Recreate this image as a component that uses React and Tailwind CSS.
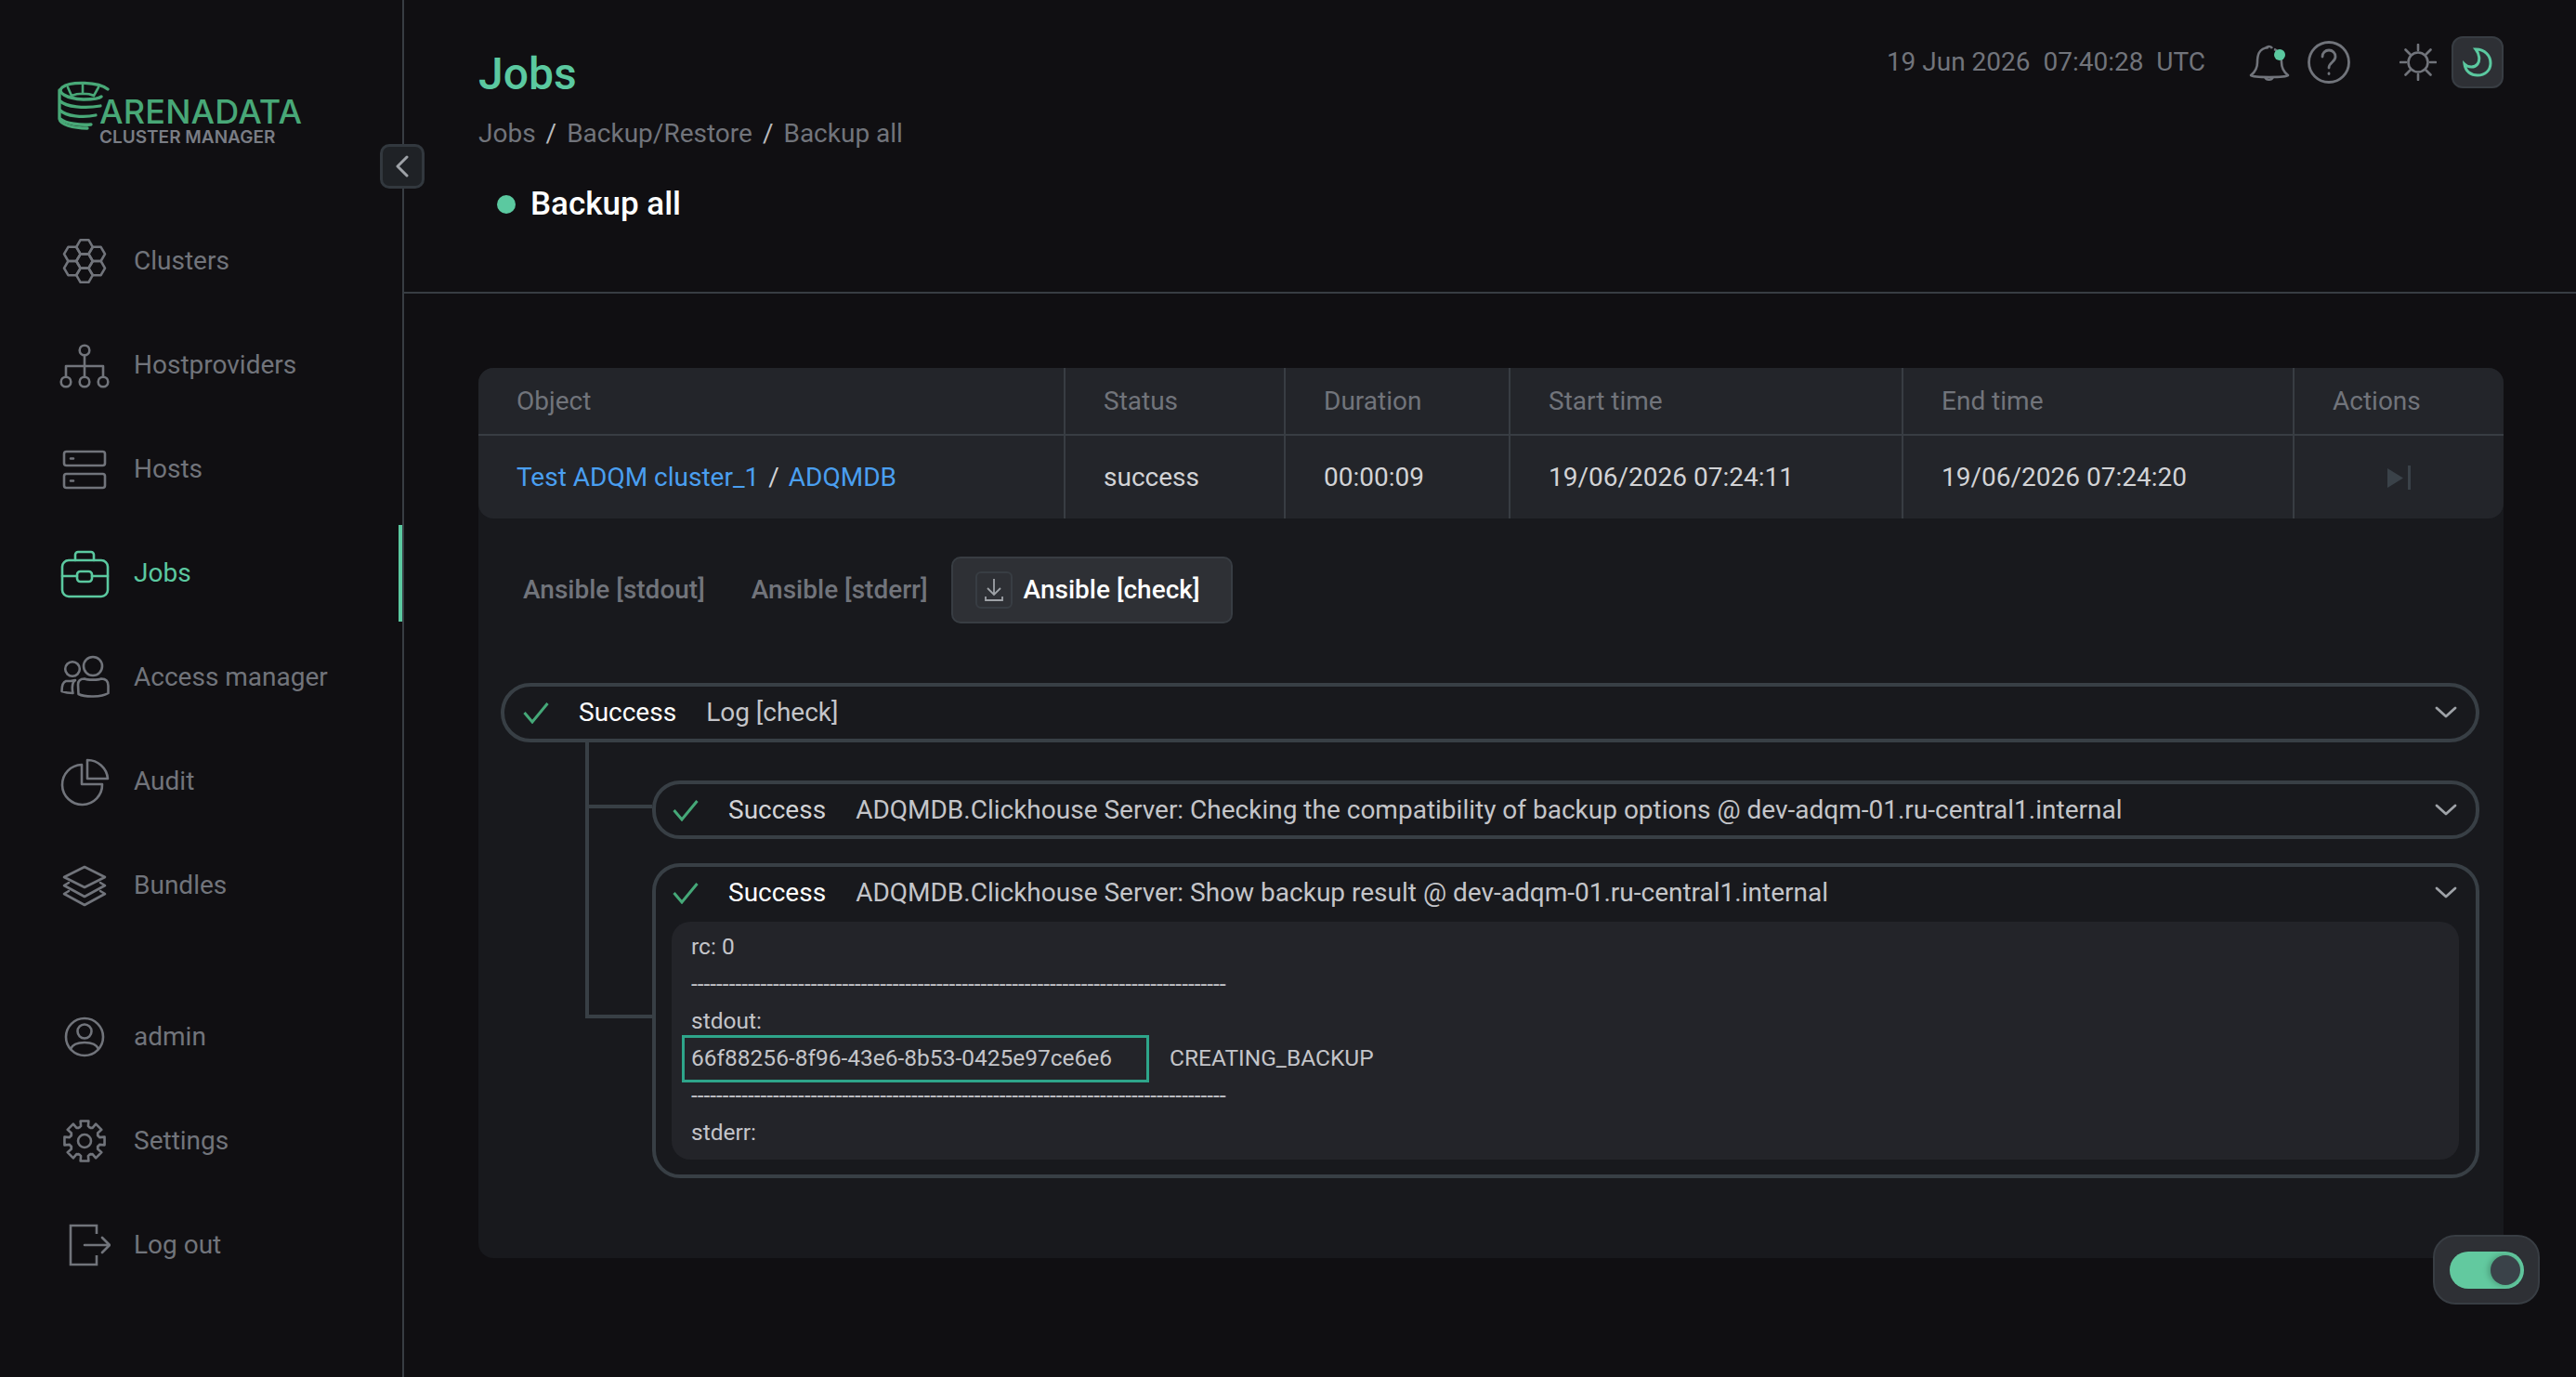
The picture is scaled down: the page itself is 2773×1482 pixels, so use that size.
import React from "react";

const hex = (cx, cy, r) =>
  [0, 60, 120, 180, 240, 300]
    .map((a) => `${(cx + r * Math.cos((a * Math.PI) / 180)).toFixed(2)},${(cy + r * Math.sin((a * Math.PI) / 180)).toFixed(2)}`)
    .join(" ");

const gearPath = () => {
  const pts = [];
  for (let i = 0; i < 8; i++) {
    const c = (i * Math.PI) / 4 - Math.PI / 2;
    [[-0.44, 15.5], [-0.24, 16.5], [-0.2, 22], [0.2, 22], [0.24, 16.5], [0.44, 15.5]].forEach(([d, r]) => {
      pts.push(`${(28 + r * Math.cos(c + d)).toFixed(2)} ${(28 + r * Math.sin(c + d)).toFixed(2)}`);
    });
  }
  return "M" + pts.join("L") + "Z";
};

// nav icons share a 56px box centred on the row
const NavIcon = ({ children }) => (
  <svg viewBox="0 0 56 56" fill="none" stroke="currentColor" strokeWidth="2.6" strokeLinejoin="round" strokeLinecap="round" className="w-[56px] h-[56px] flex-none">
    {children}
  </svg>
);

const icons = {
  clusters: (
    <>
      <polygon points={hex(28, 28, 8.8)} />
      <polygon points={hex(28, 12.8, 8.8)} />
      <polygon points={hex(28, 43.2, 8.8)} />
      <polygon points={hex(14.8, 20.4, 8.8)} />
      <polygon points={hex(41.2, 20.4, 8.8)} />
      <polygon points={hex(14.8, 35.6, 8.8)} />
      <polygon points={hex(41.2, 35.6, 8.8)} />
    </>
  ),
  hostproviders: (
    <>
      <circle cx="28" cy="12" r="5.3" />
      <path d="M28 17.3V40.5M8 40.5V29H48V40.5" />
      <circle cx="8" cy="46" r="5.3" />
      <circle cx="28" cy="46" r="5.3" />
      <circle cx="48" cy="46" r="5.3" />
    </>
  ),
  hosts: (
    <>
      <rect x="6" y="9" width="44" height="15" rx="2.5" />
      <rect x="6" y="33" width="44" height="15" rx="2.5" />
      <path d="M13 16.5h3M13 40.5h3" />
    </>
  ),
  jobs: (
    <>
      <rect x="4" y="14" width="49" height="39" rx="7" />
      <path d="M18 14V8a3 3 0 0 1 3-3h14a3 3 0 0 1 3 3v6M4 31h16M36 31h17" />
      <rect x="20" y="26" width="16" height="11" rx="3.5" />
    </>
  ),
  access: (
    <>
      <circle cx="37" cy="16" r="10" />
      <circle cx="15" cy="19" r="7.8" />
      <path d="M21 36c0-5 3-6.5 7-6.5 3 1.5 15 1.5 18 0 4 0 7.5 2 7.5 7.5v8c-7 4.5-25 4.5-32 1z" />
      <path d="M13 32l5-1-2 2c-1.5 4-1.5 8-.5 12-4 0-8-.5-12-2 0-5 1.5-10 4.5-11z" />
    </>
  ),
  audit: (
    <>
      <path d="M25 10V31H47A21.5 21.5 0 1 1 25 10Z" />
      <path d="M31 5V25H53A22 22 0 0 0 31 5Z" />
    </>
  ),
  bundles: (
    <>
      <path d="M28 8L50 19L28 30L6 19Z" />
      <path d="M11 25L6 28L28 40L50 28L45 25" />
      <path d="M11 34L6 37L28 49L50 37L45 34" />
    </>
  ),
  admin: (
    <>
      <circle cx="28" cy="28" r="20" />
      <circle cx="28" cy="22" r="7.5" />
      <path d="M13 41c2-5 8-7 15-7s13 2 15 7" />
    </>
  ),
  settings: (
    <>
      <path d={gearPath()} />
      <circle cx="28" cy="28" r="7" />
    </>
  ),
  logout: (
    <>
      <path d="M41 16V7H13V49H41V39" strokeLinecap="butt" strokeLinejoin="miter" />
      <path d="M28 28H55M47 20L55 28L47 36" />
    </>
  ),
};

const NavItem = ({ icon, label, active }) => (
  <div className={`relative flex items-center h-[112px] pl-[63px] gap-[25px] text-[28px] ${active ? "text-[#5bc9a0]" : "text-[#71747b]"}`}>
    <NavIcon>{icons[icon]}</NavIcon>
    <span>{label}</span>
    {active && <div className="absolute right-0 top-[4px] w-[4px] h-[104px] bg-[#5bc9a0]"></div>}
  </div>
);

const Logo = () => (
  <div className="relative h-[72px] w-[270px] ml-[62px]">
    <svg viewBox="0 0 56 54" fill="none" stroke="#48a877" strokeWidth="3.3" strokeLinecap="round" className="absolute left-0 top-0 w-[56px] h-[54px]">
      <path d="M54 9C44 1 14 0 5 7C-1 12 8 19 28 20C37 20 45 19 47 17" />
      <path d="M11 7L15 16C22 13 33 13 39 16L44 7M27 3V14" strokeWidth="2.6" />
      <path d="M2 10V41C3 47 16 51 32 51" />
      <path d="M3 22C9 28 29 30 46 27" />
      <path d="M3 32C9 38 27 40 41 37" />
      <path d="M3 41C9 46 24 48 36 47" />
    </svg>
    <span className="absolute left-[45px] top-[15px] font-['Inter',sans-serif] font-medium text-[#48a877] text-[36px] leading-[36px] tracking-[0.2px] whitespace-nowrap">ARENADATA</span>
    <span className="absolute left-[45px] top-[51px] font-['Inter',sans-serif] font-semibold text-[#7a7d85] text-[19px] leading-[20px] whitespace-nowrap">CLUSTER MANAGER</span>
  </div>
);

const Check = () => (
  <svg viewBox="0 0 28 24" fill="none" stroke="#45a878" strokeWidth="3" className="w-[28px] h-[24px] flex-none">
    <path d="M1.5 12L10 22L26.5 2" />
  </svg>
);

const Chevron = () => (
  <svg viewBox="0 0 24 14" fill="none" stroke="#9ea2a7" strokeWidth="2.8" strokeLinecap="round" strokeLinejoin="round" className="w-[24px] h-[14px] flex-none">
    <path d="M2 2L12 11L22 2" />
  </svg>
);

const Status = ({ strong, label }) => (
  <div className="flex items-center h-[55px]">
    <Check />
    <span className={`ml-[32px] ${strong ? "text-white" : "text-[#d2d3d6]"}`}>Success</span>
    <span className="ml-[32px] flex-1 text-[#c4c5c9]">{label}</span>
    <Chevron />
  </div>
);

const cols = "grid grid-cols-[632px_237px_242px_423px_421px_1fr]";

const Th = ({ children, last }) => (
  <div className={`flex items-center pl-[41px] ${last ? "" : "border-r-2 border-[#383d43]"}`}>{children}</div>
);

export default function App() {
  return (
    <div className="relative flex w-full h-screen overflow-hidden bg-[#100f12] font-['Roboto',sans-serif] text-[28px] leading-[40px]">
      {/* Sidebar */}
      <aside className="relative flex-none w-[435px] border-r-2 border-[#383d43] flex flex-col pt-[87px]">
        <Logo />
        <nav className="mt-[66px]">
          <NavItem icon="clusters" label="Clusters" />
          <NavItem icon="hostproviders" label="Hostproviders" />
          <NavItem icon="hosts" label="Hosts" />
          <NavItem icon="jobs" label="Jobs" active />
          <NavItem icon="access" label="Access manager" />
          <NavItem icon="audit" label="Audit" />
          <NavItem icon="bundles" label="Bundles" />
        </nav>
        <nav className="mt-[51px]">
          <NavItem icon="admin" label="admin" />
          <NavItem icon="settings" label="Settings" />
          <NavItem icon="logout" label="Log out" />
        </nav>
        <button className="absolute left-[409px] top-[155px] w-[48px] h-[48px] flex items-center justify-center rounded-[10px] border-[3px] border-[#32383e] bg-[#1f2226]">
          <svg viewBox="0 0 16 24" fill="none" stroke="#9ea2a7" strokeWidth="3" strokeLinecap="round" strokeLinejoin="round" className="w-[16px] h-[24px]">
            <path d="M13 2L3 12L13 22" />
          </svg>
        </button>
      </aside>

      {/* Main */}
      <main className="flex-1 min-w-0">
        <header className="h-[316px] border-b-2 border-[#383d43] pl-[80px] pr-[78px] flex flex-col">
          <div className="flex justify-between">
            <div className="pt-[50px]">
              <h1 className="text-[48px] leading-[60px] font-medium text-[#5bc9a0]">Jobs</h1>
              <div className="mt-[14px] flex gap-[11px] text-[#71747b]">
                <span>Jobs</span>
                <span className="text-[#b9babd]">/</span>
                <span>Backup/Restore</span>
                <span className="text-[#b9babd]">/</span>
                <span>Backup all</span>
              </div>
            </div>
            <div className="flex items-center h-[56px] mt-[39px]">
              <span className="text-[#71747b] whitespace-pre">19 Jun 2026  07:40:28  UTC</span>
              <svg viewBox="0 0 44 44" fill="none" stroke="#71747b" strokeWidth="2.6" strokeLinejoin="round" className="ml-[47px] w-[44px] h-[44px]">
                <path d="M18 7a4 4 0 0 1 7 0" />
                <path d="M21 6C10 7 9 15 9 22c0 7-3 11-7 14 1 1 4 2 20 2s19-1 20-2c-4-3-7-7-7-14 0-1 0-2-.3-3M27 8c1 .3 2 1 3 2" />
                <path d="M17 38a5 5 0 0 0 9 0" />
                <circle cx="33" cy="14" r="6" fill="#5bc9a0" stroke="none" />
              </svg>
              <svg viewBox="0 0 46 46" fill="none" stroke="#71747b" strokeWidth="2.8" strokeLinecap="round" className="ml-[19px] w-[46px] h-[46px]">
                <circle cx="23" cy="23" r="21.5" />
                <path d="M16 17c0-4 3-7 7-7s7 3 7 7c0 6-7 6-7 12" />
                <path d="M23 35v.5" />
              </svg>
              <svg viewBox="0 0 40 40" fill="none" stroke="#71747b" strokeWidth="2.6" strokeLinecap="round" className="ml-[53px] w-[40px] h-[40px]">
                <circle cx="20" cy="20" r="10.5" />
                <path d="M20 1v6M20 33v6M1 20h6M33 20h6M6.5 6.5l5 5M28.5 28.5l5 5M6.5 33.500l5-5M28.5 11.500l5-5" />
              </svg>
              <button className="ml-[16px] w-[56px] h-[56px] flex items-center justify-center rounded-[12px] border-2 border-[#383d43] bg-[#2e3035]">
                <svg viewBox="0 0 32 32" fill="none" stroke="#5bc9a0" strokeWidth="3" strokeLinecap="round" className="w-[32px] h-[32px]">
                  <path d="M14 2C24 2 30 9 30 17C30 25 24 30 16 30C9 30 3 26 2 18C6 22 13 22 16 18C19 14 18 7 14 2Z" />
                </svg>
              </button>
            </div>
          </div>
          <div className="mt-[36px] flex items-center pl-[20px] gap-[16px] h-[40px]">
            <span className="w-[20px] h-[20px] rounded-full bg-[#5bc9a0]"></span>
            <span className="text-[35px] font-medium text-white">Backup all</span>
          </div>
        </header>

        <div className="pl-[80px] pr-[78px] pt-[80px]">
          <section className="h-[958px] rounded-[16px] bg-[#18191d]">
            {/* Job table */}
            <div className="rounded-[16px] bg-[#23252a]">
              <div className={`${cols} h-[73px] border-b-2 border-[#383d43] text-[#71747b]`}>
                <Th>Object</Th>
                <Th>Status</Th>
                <Th>Duration</Th>
                <Th>Start time</Th>
                <Th>End time</Th>
                <Th last>Actions</Th>
              </div>
              <div className={`${cols} h-[89px] text-[#d2d3d6]`}>
                <Th>
                  <span className="text-[#4a9ff0]">Test ADQM cluster_1</span>
                  <span className="mx-[10px]">/</span>
                  <span className="text-[#4a9ff0]">ADQMDB</span>
                </Th>
                <Th>success</Th>
                <Th>00:00:09</Th>
                <Th>19/06/2026 07:24:11</Th>
                <Th>19/06/2026 07:24:20</Th>
                <div className="flex items-center justify-center pl-[-2px]">
                  <svg viewBox="0 0 26 26" fill="#3a4249" className="w-[26px] h-[26px]">
                    <path d="M0 3L0 24L17 13.500Z" />
                    <rect x="22" y="0" width="3" height="26" />
                  </svg>
                </div>
              </div>
            </div>

            {/* Log tabs */}
            <div className="flex items-center h-[72px] mt-[41px] pl-[48px] font-medium">
              <span className="text-[#71747b]">Ansible [stdout]</span>
              <span className="ml-[50px] text-[#71747b]">Ansible [stderr]</span>
              <div className="ml-[25px] h-[72px] w-[303px] flex items-center gap-[12px] pl-[24px] rounded-[10px] border-2 border-[#383d43] bg-[#2e3035] text-white">
                <div className="w-[40px] h-[40px] flex items-center justify-center rounded-[6px] border-2 border-[#383d43]">
                  <svg viewBox="0 0 20 26" fill="none" stroke="#9ea2a7" strokeWidth="1.8" className="w-[20px] h-[26px]">
                    <path d="M10 1V18M3 11L10 18L17 11M1 20V24H19V20" />
                  </svg>
                </div>
                <span>Ansible [check]</span>
              </div>
            </div>

            {/* Log tree */}
            <div className="mt-[64px] ml-[24px] mr-[26px]">
              <div className="h-[64px] px-[20px] pr-[20px] rounded-[32px] border-4 border-[#383f45] flex items-center">
                <div className="flex-1"><Status strong label="Log [check]" /></div>
              </div>
              <div className="flex">
                <div className="ml-[91px] w-[72px] flex-none">
                  <div className="h-[71px] border-l-4 border-b-4 border-[#383f45]"></div>
                  <div className="h-[226px] border-l-4 border-b-4 border-[#383f45]"></div>
                </div>
                <div className="flex-1 min-w-0 pt-[41px]">
                  <div className="h-[63px] pl-[18px] pr-[20px] rounded-[30px] border-4 border-[#383f45] flex items-center">
                    <div className="flex-1"><Status label="ADQMDB.Clickhouse Server: Checking the compatibility of backup options @ dev-adqm-01.ru-central1.internal" /></div>
                  </div>
                  <div className="mt-[26px] h-[339px] pl-[18px] pr-[20px] rounded-[30px] border-4 border-[#383f45] flex flex-col">
                    <Status strong label="ADQMDB.Clickhouse Server: Show backup result @ dev-adqm-01.ru-central1.internal" />
                    <div className="mt-[4px] -ml-[1px] -mr-[2px] h-[256px] rounded-[20px] bg-[#232429] pl-[21px] pt-[7px] text-[24.5px] leading-[40px] text-[#c4c5c9]">
                      <div>rc: 0</div>
                      <div className="overflow-hidden whitespace-nowrap w-[576px]">{"-".repeat(94)}</div>
                      <div>stdout:</div>
                      <div className="flex items-center -ml-[10px] h-[40px]">
                        <span className="h-[51px] pl-[7px] w-[503px] flex items-center border-[3px] border-[#2ea58a]">66f88256-8f96-43e6-8b53-0425e97ce6e6</span>
                        <span className="ml-[22px]">CREATING_BACKUP</span>
                      </div>
                      <div className="overflow-hidden whitespace-nowrap w-[576px]">{"-".repeat(94)}</div>
                      <div>stderr:</div>
                    </div>
                  </div>
                </div>
              </div>
            </div>
          </section>
        </div>
      </main>

      {/* Floating toggle */}
      <div className="absolute left-[2619px] top-[1329px] w-[115px] h-[75px] rounded-[24px] border-2 border-[#383d43] bg-[#2e3035] flex items-center justify-center">
        <div className="relative w-[80px] h-[40px] rounded-full bg-[#62c99f]">
          <div className="absolute right-[4px] top-[4px] w-[32px] h-[32px] rounded-full bg-[#3a4249] shadow-[-2px_0_6px_rgba(0,0,0,0.25)]"></div>
        </div>
      </div>
    </div>
  );
}
